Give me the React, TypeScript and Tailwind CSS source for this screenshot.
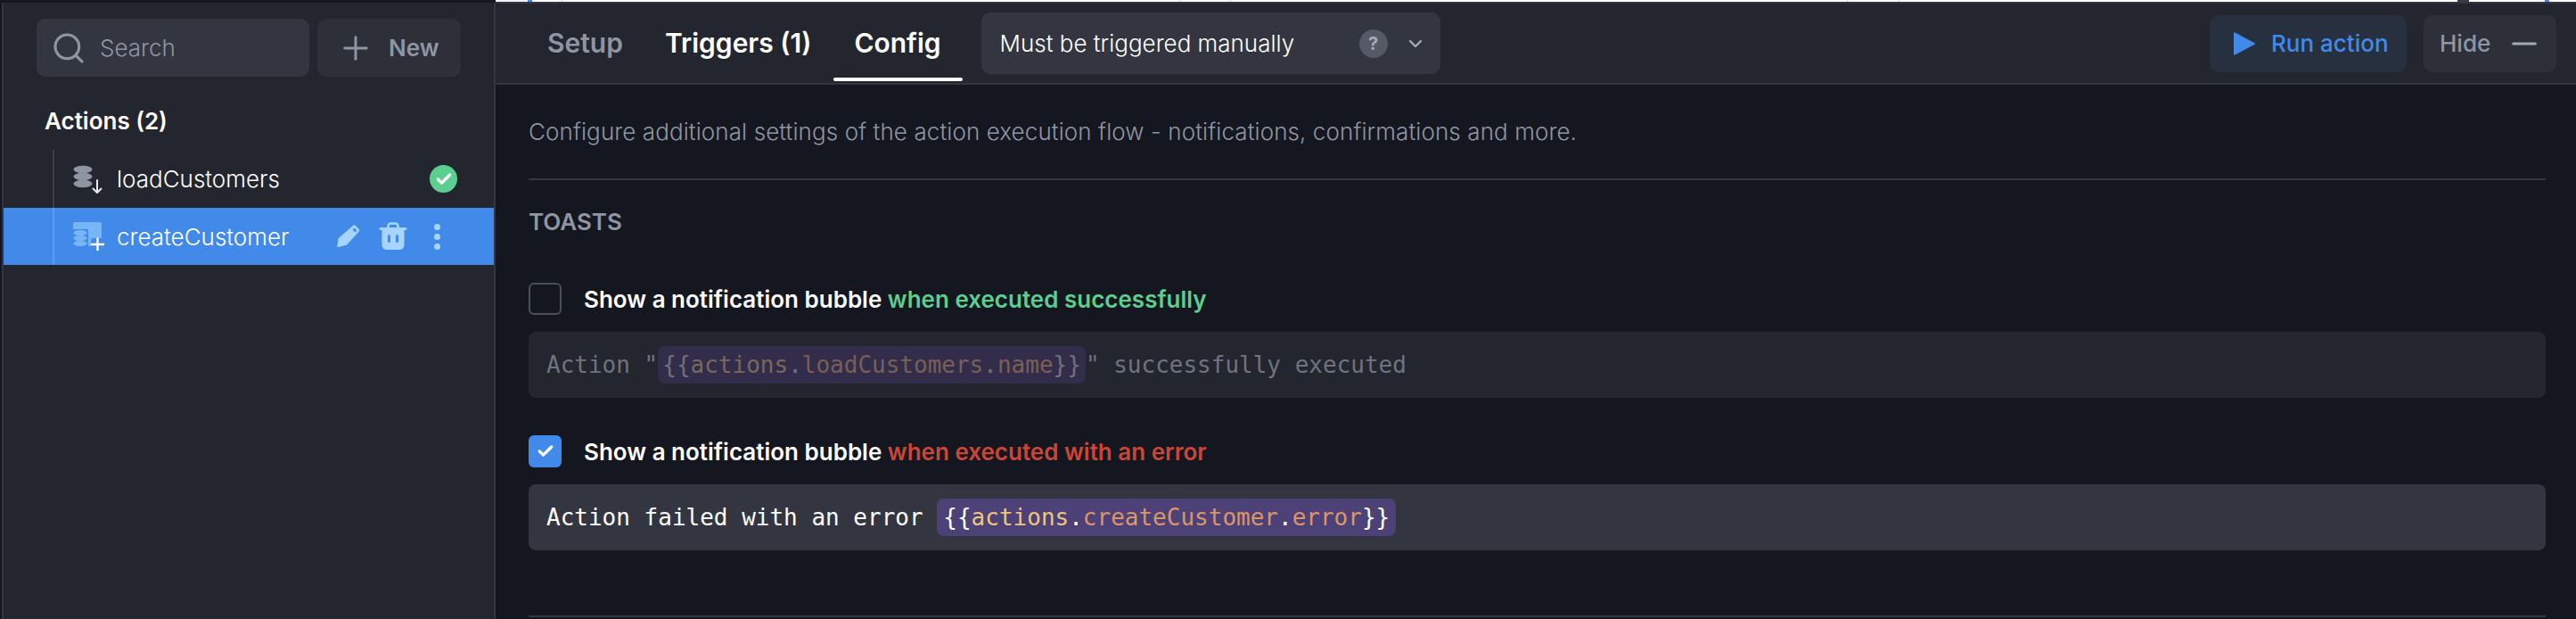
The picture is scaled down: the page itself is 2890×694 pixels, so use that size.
import { Check, ChevronDown, Minus, Plus, Search } from 'lucide-react'

const MONO = "font-['DejaVu_Sans_Mono',monospace]"

function DbStack({ cx, cy, rx, h, fill }: { cx: number; cy: number; rx: number; h: number; fill: string }) {
  // three stacked discs
  return (
    <g fill={fill}>
      {[0, 1, 2].map((i) => (
        <ellipse key={i} cx={cx} cy={cy + i * h} rx={rx} ry={h * 0.52} />
      ))}
    </g>
  )
}

function LoadIcon() {
  return (
    <svg width="34" height="34" viewBox="0 0 34 34" className="shrink-0">
      <DbStack cx={11} cy={6} rx={10.5} h={8} fill="#8f95a3" />
      <path d="M27 18v14M22.500 27.500l4.500 4.500 4.500-4.500" fill="none" stroke="#e8eaee" strokeWidth="2" strokeLinecap="round" strokeLinejoin="round" />
    </svg>
  )
}

function CreateIcon() {
  return (
    <svg width="36" height="32" viewBox="0 0 36 32" className="shrink-0">
      <path d="M2 0h28a2 2 0 0 1 2 2v16h-9a3 3 0 0 0-3 3v6H2a2 2 0 0 1-2-2V2a2 2 0 0 1 2-2z" fill="#78b5f5" />
      <path d="M0 8h17v20H0z" fill="#418aea" />
      <DbStack cx={8} cy={12} rx={7.500} h={6} fill="#78b5f5" />
      <path d="M27.500 18.500v13M21 25h13" fill="none" stroke="#ffffff" strokeWidth="2.400" strokeLinecap="round" />
    </svg>
  )
}

function PencilIcon() {
  return (
    <svg width="26" height="26" viewBox="0 0 26 26" className="shrink-0">
      <path d="M18 1a2 2 0 0 1 2.800 0l3.800 4a2 2 0 0 1 0 2.700L11 22.500a2 2 0 0 1-1.400.6L2 25a1.400 1.400 0 0 1-1.700-1.600L1.500 16a2 2 0 0 1 .6-1.200z" fill="#a6d4ff" />
      <path d="M17.500 5.500l2-2 3 3-2 2z" fill="#418aea" />
    </svg>
  )
}

function TrashIcon() {
  return (
    <svg width="32" height="32" viewBox="0 0 32 32" className="shrink-0">
      <path d="M10.500 6V4.500A3 3 0 0 1 13.500 1.500h5a3 3 0 0 1 3 3V6" fill="none" stroke="#a6d4ff" strokeWidth="2.600" />
      <rect x="0.500" y="6" width="31" height="3" rx="1.500" fill="#a6d4ff" />
      <path d="M3.500 9h25v17a5 5 0 0 1-5 5h-15a5 5 0 0 1-5-5z" fill="#a6d4ff" />
      <rect x="10" y="14" width="3" height="9" rx="1.500" fill="#418aea" />
      <rect x="19" y="14" width="3" height="9" rx="1.500" fill="#418aea" />
    </svg>
  )
}

function Sidebar() {
  return (
    <aside className="w-[552px] shrink-0 flex-1 bg-[#23262f] border-r-2 border-[#333640] flex flex-col">
      <div className="flex gap-[9px] pl-[37px] pt-[18px]">
        <div className="w-[306px] h-[65px] rounded-[10px] bg-[#333640] flex items-center pl-[16px] gap-[15px]">
          <Search size={40} strokeWidth={1.900} className="text-[#8f95a3]" />
          <span className="text-[26px] font-light text-[#8f95a3]">Search</span>
        </div>
        <div className="w-[161px] h-[65px] rounded-[10px] bg-[#2d3039] flex items-center pl-[22px] gap-[16px]">
          <Plus size={42} strokeWidth={1.700} className="text-[#8f95a3]" />
          <span className="text-[26px] font-semibold text-[#8f95a3]">New</span>
        </div>
      </div>

      <div className="pl-[46px] mt-[32px] h-[34px] flex items-center text-[26px] font-semibold text-white">Actions (2)</div>

      <div className="mt-[16px] h-[65px] flex items-center relative pl-[78px] pr-[41px]">
        <div className="absolute left-[55px] top-0 bottom-0 w-[2px] bg-[#3c3f4a]" />
        <LoadIcon />
        <span className="ml-[15px] text-[26px] font-light text-white flex-1">loadCustomers</span>
        <span className="w-[31px] h-[31px] rounded-full bg-[#5bcf8f] flex items-center justify-center">
          <Check size={20} strokeWidth={4} className="text-white" />
        </span>
      </div>

      <div className="h-[64px] bg-[#418aea] flex items-center relative pl-[78px]">
        <div className="absolute left-[55px] top-0 bottom-0 w-[2px] bg-[#5b9cf0]" />
        <CreateIcon />
        <span className="ml-[13px] text-[26px] font-light text-white w-[247px]">createCustomer</span>
        <PencilIcon />
        <span className="ml-[21px]"><TrashIcon /></span>
        <span className="ml-[30px] flex flex-col gap-[4px]">
          <i className="block w-[7px] h-[7px] rounded-full bg-[#a6d4ff]" />
          <i className="block w-[7px] h-[7px] rounded-full bg-[#a6d4ff]" />
          <i className="block w-[7px] h-[7px] rounded-full bg-[#a6d4ff]" />
        </span>
      </div>
    </aside>
  )
}

function Header() {
  return (
    <header className="h-[91px] shrink-0 bg-[#23262f] border-b-2 border-[#333640] flex items-center pl-[58px] pr-[22px]">
      <span className="text-[30px] font-semibold text-[#8f95a3]">Setup</span>
      <span className="ml-[47px] text-[30px] font-semibold text-white">Triggers (1)</span>
      <span className="ml-[48px] text-[30px] font-semibold text-white relative">
        Config
        <span className="absolute left-[-23px] right-[-24px] top-[61px] h-[4px] rounded-sm bg-white" />
      </span>
      <div className="ml-[45px] w-[515px] h-[69px] rounded-[10px] bg-[#333640] flex items-center pl-[21px]">
        <span className="text-[26px] font-light text-white w-[403px]">Must be triggered manually</span>
        <span className="w-[32px] h-[32px] rounded-full bg-[#565a67] flex items-center justify-center text-[20px] font-bold text-[#a5aab5]">?</span>
        <ChevronDown size={24} strokeWidth={2.400} className="ml-[19px] text-[#a5aab5]" />
      </div>
      <div className="ml-auto flex gap-[19px]">
        <div className="w-[221px] h-[64px] rounded-[10px] bg-[#27303f] flex items-center pl-[27px] gap-[18px]">
          <svg width="24" height="26" viewBox="0 0 24 26" className="shrink-0">
            <path d="M1.500 0.500 23 12a1 1 0 0 1 0 2L1.500 25.500a1 1 0 0 1-1.500-1V1.500a1 1 0 0 1 1.500-1z" fill="#418aea" />
          </svg>
          <span className="text-[26px] font-medium text-[#418aea]">Run action</span>
        </div>
        <div className="w-[149px] h-[64px] rounded-[10px] bg-[#2d3039] flex items-center pl-[18px] gap-[17px]">
          <span className="text-[26px] font-medium text-[#8f95a3]">Hide</span>
          <Minus size={42} strokeWidth={1.800} className="text-[#a5aab5]" />
        </div>
      </div>
    </header>
  )
}

function Toggle({ on, children }: { on?: boolean; children: React.ReactNode }) {
  return (
    <div className="flex items-center h-[36px]">
      {on ? (
        <span className="w-[37px] h-[36px] rounded-[6px] bg-[#418aea] flex items-center justify-center">
          <Check size={20} strokeWidth={4} className="text-white" />
        </span>
      ) : (
        <span className="w-[37px] h-[36px] rounded-[6px] border-2 border-[#4a4e5a]" />
      )}
      <span className="ml-[25px] text-[26px] font-semibold text-white">{children}</span>
    </div>
  )
}

function Body() {
  return (
    <div className="flex-1 pl-[37px] pr-[34px] bg-[#14171f]">
      <div className="h-[107px] flex items-center border-b-2 border-[#333640] text-[26px] font-light tracking-[0.09px] text-[#8f95a3]">
        Configure additional settings of the action execution flow - notifications, confirmations and more.
      </div>
      <div className="mt-[29px] h-[34px] flex items-center text-[26px] font-semibold text-[#8f95a3]">TOASTS</div>

      <div className="mt-[52px]">
        <Toggle>
          Show a notification bubble <span className="text-[#5bcf8f]">when executed successfully</span>
        </Toggle>
      </div>
      <div className={`mt-[19px] h-[74px] rounded-[8px] bg-[#23262f] flex items-center pl-[20px] text-[26px] whitespace-pre text-[#6f737d] ${MONO}`}>
        <span>Action "</span>
        <span className="h-[42px] rounded-[8px] bg-[#322d4b] flex items-center px-[5px]">
          {'{{'}
          <span className="text-[#79695a]">actions</span>.<span className="text-[#7a5f55]">loadCustomers</span>.<span className="text-[#7a5f55]">name</span>
          {'}}'}
        </span>
        <span>" successfully executed</span>
      </div>

      <div className="mt-[42px]">
        <Toggle on>
          Show a notification bubble <span className="text-[#cc4638]">when executed with an error</span>
        </Toggle>
      </div>
      <div className={`mt-[19px] h-[74px] rounded-[8px] bg-[#333640] flex items-center pl-[20px] text-[26px] whitespace-pre text-white ${MONO}`}>
        <span>Action failed with an error </span>
        <span className="h-[42px] rounded-[8px] bg-[#4d4278] flex items-center px-[7px]">
          {'{{'}
          <span className="text-[#efc57c]">actions</span>.<span className="text-[#dd9468]">createCustomer</span>.<span className="text-[#dd9468]">error</span>
          {'}}'}
        </span>
      </div>

      <div className="mt-[73px] h-[2px] bg-[#333640]" />
    </div>
  )
}

export default function App() {
  return (
    <div className="w-[2890px] h-[694px] overflow-hidden bg-[#14171f] font-['Inter',sans-serif] flex flex-col">
      {/* sliver of the page behind the panel */}
      <div className="h-[2px] shrink-0 flex bg-white">
        <div className="w-[556px] bg-[#14171f]" />
        <div className="w-[36px] bg-[#f1f3f6]" />
        <div className="w-[5px] bg-[#418aea]" />
        <div className="ml-[33px] w-[1px] bg-[#d5d8de]" />
        <div className="ml-[692px] w-[1px] bg-[#d5d8de]" />
        <div className="ml-[56px] w-[1px] bg-[#d5d8de]" />
        <div className="ml-[691px] w-[1px] bg-[#d5d8de]" />
        <div className="ml-[57px] w-[1px] bg-[#d5d8de]" />
        <div className="ml-[626px] w-[13px] bg-[#3a3d46]" />
        <div className="ml-[85px] w-[5px] bg-[#418aea]" />
      </div>
      <div className="flex-1 flex min-h-0">
        <div className="w-[2px] shrink-0 bg-[#14171f]" />
        <div className="w-[2px] shrink-0 bg-[#333640] mt-[1px]" />
        <div className="flex flex-col">
          <div className="h-[1px] bg-[#14171f]" />
          <Sidebar />
        </div>
        <main className="flex-1 flex flex-col min-w-0">
          <div className="h-[2px] shrink-0 bg-[#333640]" />
          <Header />
          <Body />
        </main>
      </div>
    </div>
  )
}
